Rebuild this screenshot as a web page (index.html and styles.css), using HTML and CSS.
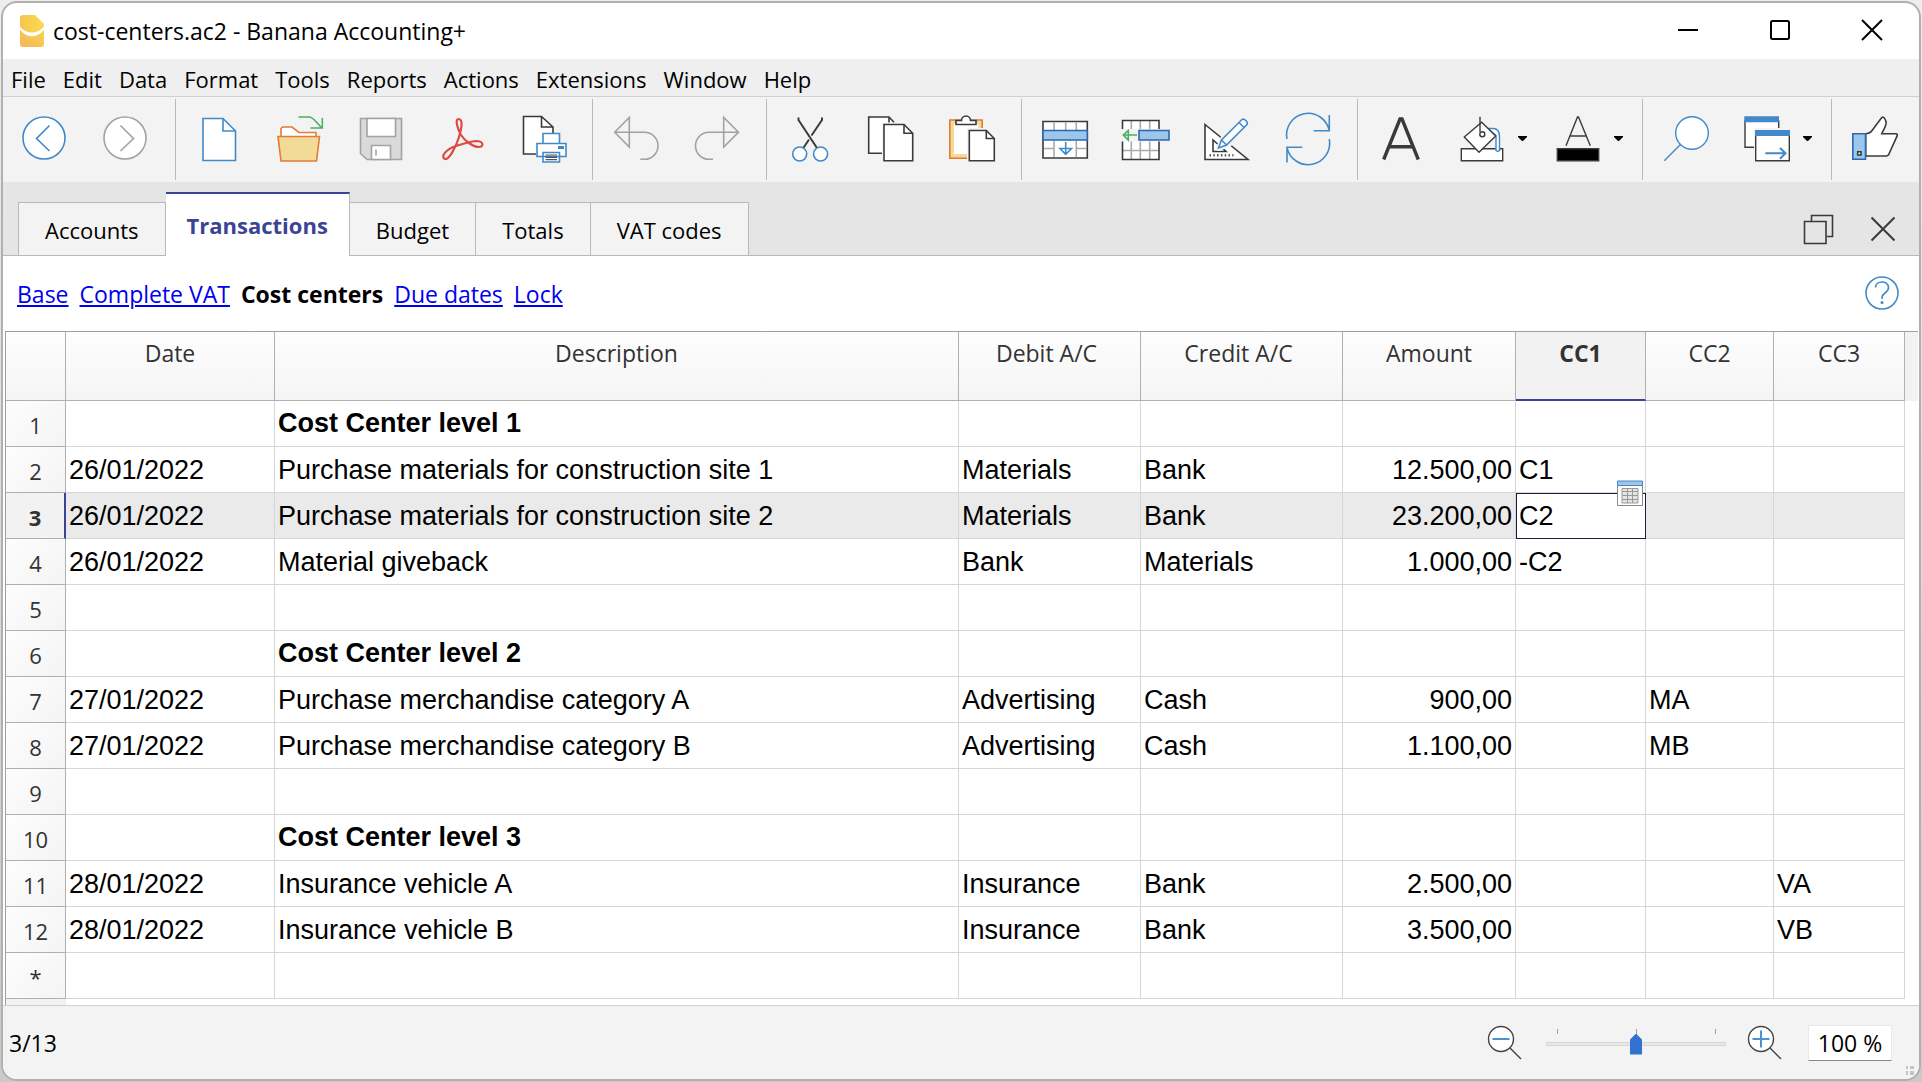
FILE: index.html
```html
<!DOCTYPE html>
<html lang="en">
<head>
<meta charset="utf-8">
<title>cost-centers.ac2 - Banana Accounting+</title>
<link rel="stylesheet" href="styles.css">
</head>
<body>
<div class="window">

<header class="titlebar">
  <svg class="app-icon" viewBox="0 0 24 32" aria-hidden="true">
    <defs>
      <linearGradient id="gt" x1="0" y1="0" x2="1" y2="0"><stop offset="0" stop-color="#f6c44f"/><stop offset="1" stop-color="#f8dc52"/></linearGradient>
      <linearGradient id="gb" x1="0" y1="1" x2="1" y2="0"><stop offset="0" stop-color="#f4b55c"/><stop offset="1" stop-color="#f8d54e"/></linearGradient>
    </defs>
    <path d="M0 11.500V3a3 3 0 0 1 3-3h12l9 9v2.500c-6 8-18 8-24 0z" fill="url(#gt)"/>
    <path d="M0 14.500c6 9 18 9 24 0V29a3 3 0 0 1-3 3H3a3 3 0 0 1-3-3z" fill="url(#gb)"/>
  </svg>
  <h1 class="title">cost-centers.ac2 - Banana Accounting+</h1>
  <div class="window-controls">
    <button type="button" aria-label="Minimize"><svg viewBox="0 0 24 24"><path d="M2 12h20"/></svg></button>
    <button type="button" aria-label="Maximize"><svg viewBox="0 0 24 24"><rect x="3" y="3" width="18" height="18" rx="1.5"/></svg></button>
    <button type="button" aria-label="Close"><svg viewBox="0 0 24 24"><path d="M2 2l20 20M22 2L2 22"/></svg></button>
  </div>
</header>

<nav class="menubar" aria-label="Menu">
  <button type="button">File</button>
  <button type="button">Edit</button>
  <button type="button">Data</button>
  <button type="button">Format</button>
  <button type="button">Tools</button>
  <button type="button">Reports</button>
  <button type="button">Actions</button>
  <button type="button">Extensions</button>
  <button type="button">Window</button>
  <button type="button">Help</button>
</nav>

<div class="toolbar" role="toolbar" aria-label="Tools">
  <div class="group">
    <button type="button" aria-label="Back"><svg class="ic blue" viewBox="0 0 48 48"><circle cx="24" cy="24" r="21" fill="#fff"/><path d="M29.500 11.500L16.500 24.500l13 12.500"/></svg></button>
    <button type="button" aria-label="Forward"><svg class="ic gray" viewBox="0 0 48 48"><circle cx="24" cy="24" r="21" fill="#fff"/><path d="M19.500 11.500l13 13-13 12.500"/></svg></button>
  </div>
  <div class="group">
    <button type="button" aria-label="New"><svg class="ic blue" viewBox="0 0 48 48"><path fill="#fff" d="M9 4.500h20l12.500 12.500v29.500H9z"/><path d="M29 4.500V17h12.500"/></svg></button>
    <button type="button" aria-label="Open"><svg class="ic" viewBox="0 0 48 48"><g stroke="#e07b39"><path fill="#fff" d="M6 23V14.500l1.500-1.500H17l7 5.500h17V23z"/><path fill="#f2da97" d="M3 22.500h41.500L41.500 47H6z"/></g><path stroke="#4caf64" d="M23.500 3H34c4 0 6 4 13 11M35.500 14H47.300V4"/></svg></button>
    <button type="button" aria-label="Save"><svg class="ic gray" viewBox="0 0 48 48"><path fill="#dadada" d="M4.500 4.500h41v41H11L4.500 39.500z"/><path fill="#fff" d="M11 4.500h28.500v18H11zM15.500 31.500h19v14h-19z"/><path d="M20 35.500v6"/></svg></button>
    <button type="button" aria-label="Export to PDF"><svg class="ic pdf" viewBox="0 0 48 48"><path d="M24 21C20 14 18 5 21.500 5C26 5 25 13 22 23C19 33 12 46 8 45C3 43 9 35 19 32C27 29.500 34 27.500 39 27C47 27 47 33 42 33C36 33 28 27 24 21Z"/></svg></button>
    <button type="button" aria-label="Print preview"><svg class="ic" viewBox="0 0 48 48"><path stroke="none" fill="#fff" d="M5.500 2.500h18L35 13v18H18v9H5.500z"/><path d="M18 40H5.500V2.500h18L35 13v6M23.500 2.500V13H35"/><g stroke="#4189c9" fill="#fff"><path d="M25 19.500h16.500v10H25zM19 29.500h29v13H19zM25 38.500h16.500v9.500H25z"/></g><path fill="#4189c9" stroke="none" d="M40 32h6v3h-6z"/><path stroke-width="1.200" stroke="#555" d="M27.500 41H39M27.500 43.300H39M27.500 45.600H39"/></svg></button>
  </div>
  <div class="group">
    <button type="button" aria-label="Undo"><svg class="ic gray" viewBox="0 0 48 48"><path d="M18.300 3.500V33L3.700 18.300zM3.700 18.300H33.500a13.500 13.500 0 0 1 0 27H29.300"/></svg></button>
    <button type="button" aria-label="Redo"><svg class="ic gray" viewBox="0 0 48 48"><path d="M31.700 3.500V33l14.800-14.700zM46.500 18.300H17a13.500 13.500 0 0 0 0 27h4"/></svg></button>
  </div>
  <div class="group">
    <button type="button" aria-label="Cut"><svg class="ic" viewBox="0 0 48 48"><path stroke-width="2" d="M13.500 3.500V6L32 34M37 3.500V6L26.500 21.500M24 25.500L18.300 34"/><g stroke="#4189c9" fill="#fff"><circle cx="14.700" cy="40" r="7"/><circle cx="35.600" cy="40" r="7"/></g></svg></button>
    <button type="button" aria-label="Copy"><svg class="ic" viewBox="0 0 48 48"><path stroke="none" fill="#fff" d="M2.700 3H23l5 5.500H16v31H2.700z"/><path d="M16 39.300H2.700V3H23l5 5.300M23 3v5.500"/><path fill="#fff" d="M18 10.500h20l8.700 8.800v27.400H18z"/><path d="M38 10.500v8.800h8.700"/></svg></button>
    <button type="button" aria-label="Paste"><svg class="ic" viewBox="0 0 48 48"><path stroke="#e07b39" fill="#f2da97" d="M2.800 6h32.400v38.300H2.800z"/><path stroke="none" fill="#fff" d="M7 10h24.500v30H7z"/><path fill="#fff" d="M9 10.500v-4h5.500a4.500 4.500 0 0 1 9 0H29v4z"/><path stroke="none" fill="#f3f3f3" d="M20 14h28v34H20z"/><path fill="#fff" d="M22.300 16.500h17l8 8v22.200h-25z"/><path d="M39.300 16.500v8h8"/></svg></button>
  </div>
  <div class="group">
    <button type="button" aria-label="Insert rows"><svg class="ic" viewBox="0 0 48 48"><path fill="#fff" d="M3 7.500h44.300V44H3z"/><path stroke="#aaa" d="M14 8.500v8M25.700 8.500v8M36.300 8.500v8M14 27v16M36.300 27v16M4 34.500h10M36.300 34.500h10"/><path stroke="#2f66b0" fill="#9cc7ea" d="M3 16.500h44.300V26H3z"/><path stroke="#4189c9" d="M25.700 28v12.300M20 34.500h11.500l-5.800 5.800z"/></svg></button>
    <button type="button" aria-label="Delete rows"><svg class="ic" viewBox="0 0 48 48"><path stroke="none" fill="#fff" d="M1.500 6H38v9H1.500zM1.500 27.500H38v18H1.500z"/><path stroke="#aaa" d="M10.300 6v9M19.300 6v9M28.700 6v9M10.300 27.500v18M19.300 27.500v18M28.700 27.500v18M1.500 36.500H38"/><path d="M1.500 15V6.500H38V15M1.500 27.500v18H38v-18"/><path stroke="#2f66b0" fill="#9cc7ea" d="M18 16.500h30v9.500H18z"/><path stroke="#4caf64" d="M16 21H2.500M7.300 16.500v9.500L2.300 21z"/></svg></button>
    <button type="button" aria-label="Edit draft"><svg class="ic" viewBox="0 0 48 48"><path fill="#fff" d="M3 10.500L46 45.500H3z"/><path d="M11 26v11.500h13z"/><path stroke-dasharray="1.500 2.300" stroke="#555" stroke-width="2.500" d="M7.500 41.300H31.500"/><path stroke="#f3f3f3" stroke-width="6" d="M17 34l5-11 10-8 4 7-8 7z" stroke-linejoin="round"/><g stroke="#4189c9"><path fill="#fff" d="M16.500 34l3-8L40 5.500c2-1.500 6.500 2.500 5 5L24.500 31z"/><path d="M37 8.500l5.500 5.500M19.500 26l5 5"/></g></svg></button>
    <button type="button" aria-label="Recalculate"><svg class="ic blue" viewBox="0 0 48 48"><path d="M4 25A21.300 21.300 0 0 1 46.300 16.700M46.300 1v15.700H30.700M46.300 25A21.300 21.300 0 0 1 4 33.300M4 48.500V33.300H19.300"/></svg></button>
  </div>
  <div class="group">
    <button type="button" aria-label="Font"><svg class="ic bold" viewBox="0 0 48 48"><path d="M7.700 45.500L24 5h2l16.300 40.500M13 32.700h24"/></svg></button>
    <button type="button" class="with-menu" aria-label="Background colour"><svg class="ic thin" viewBox="0 0 48 48"><path fill="#fff" d="M4.300 34.700h41.400v12H4.300z"/><path fill="#fff" stroke="#4189c9" d="M31 14.500h5c5 0 6.500 3 6.500 8v14l-2 1-1.500-1v-15z"/><path fill="#fff" d="M24.700 8.300L38.700 22 22 38.300 7.300 23z"/><path d="M23 2.700v15"/><circle cx="25.300" cy="20.300" r="2.500"/></svg><svg class="caret" viewBox="0 0 9 5"><path d="M0 0h9v1L5 5H4L0 1z"/></svg></button>
    <button type="button" class="with-menu" aria-label="Text colour"><svg class="ic thin" viewBox="0 0 48 48"><path fill="#000" d="M4.300 34.700h41.400v12H4.300z"/><path d="M13 31.700L24.500 3h1l11.800 28.700M16.500 22h17"/></svg><svg class="caret" viewBox="0 0 9 5"><path d="M0 0h9v1L5 5H4L0 1z"/></svg></button>
  </div>
  <div class="group">
    <button type="button" aria-label="Find"><svg class="ic blue thin" viewBox="0 0 48 48"><circle cx="31" cy="19" r="16.300" fill="#fff"/><path d="M19.700 30.300L3.300 46.700"/></svg></button>
    <button type="button" class="with-menu" aria-label="Windows"><svg class="ic thin" viewBox="0 0 48 48"><path stroke="none" fill="#fff" d="M3 3h34v30H3z"/><path d="M12 33.300H3V6M36.700 6v8"/><path stroke="none" fill="#f3f3f3" d="M12 14h26v21H12z"/><path fill="#fff" d="M13.700 17h33.600v29.700H13.700z"/><path stroke="none" fill="#4189c9" d="M2.300 2.300h34.700v6H2.300zM13 16h35v6H13z"/><path stroke="#4189c9" stroke-width="2" d="M23.300 39.300h20M38 34l5.500 5.300L38 44.700"/></svg><svg class="caret" viewBox="0 0 9 5"><path d="M0 0h9v1L5 5H4L0 1z"/></svg></button>
  </div>
  <div class="group">
    <button type="button" aria-label="Feedback"><svg class="ic" viewBox="0 0 48 48"><path fill="#fff" d="M15.700 19.700c3 0 4.500-.7 6-2.700L31 4.500c2-3 4-.5 5 3 1 4-2.500 8-4.300 12.200H46c1.500 0 1.500 1 1 2.500L38.500 41l-2 1H15.700z"/><path stroke="#2f66b0" fill="#9cc7ea" d="M2.800 19.800h12.700v25.400H2.800z"/><path d="M7.700 37.700h3.300v3.300H7.700z" fill="#fff"/></svg></button>
  </div>
</div>

<div class="tabstrip">
  <div class="tabs" role="tablist" aria-label="Tables">
    <button type="button" role="tab" class="tab">Accounts</button>
    <button type="button" role="tab" class="tab active" aria-selected="true">Transactions</button>
    <button type="button" role="tab" class="tab">Budget</button>
    <button type="button" role="tab" class="tab">Totals</button>
    <button type="button" role="tab" class="tab">VAT codes</button>
  </div>
  <div class="tab-actions">
    <button type="button" aria-label="Restore"><svg viewBox="0 0 32 32"><path d="M8.500 8V2.500h21v21H24M1.500 8.500h21.500v22H1.500z"/></svg></button>
    <button type="button" aria-label="Close table"><svg class="close" viewBox="0 0 32 32"><path d="M4.500 4.500l23 23M27.500 4.500l-23 23"/></svg></button>
  </div>
</div>

<div class="views">
  <nav class="view-links" aria-label="Views">
    <a href="#base">Base</a>
    <a href="#vat">Complete VAT</a>
    <strong>Cost centers</strong>
    <a href="#due">Due dates</a>
    <a href="#lock">Lock</a>
  </nav>
  <button type="button" class="help" aria-label="Help"><svg viewBox="0 0 34 34"><circle cx="17" cy="17" r="16"/><path d="M10.500 11.500c0-7 13-7.500 13 0 0 6-6.500 5-6.500 10v1.500"/><circle class="dot" cx="17" cy="26.500" r="1.500"/></svg></button>
</div>

<main class="sheet">
<table>
  <colgroup>
    <col class="c-num"><col class="c-date"><col><col class="c-debit"><col class="c-credit"><col class="c-amount"><col class="c-cc1"><col class="c-cc2"><col class="c-cc3"><col class="c-rest">
  </colgroup>
  <thead>
    <tr><th></th><th>Date</th><th>Description</th><th class="account">Debit A/C</th><th class="account">Credit A/C</th><th>Amount</th><th class="current">CC1</th><th>CC2</th><th>CC3</th><th class="rest"></th></tr>
  </thead>
  <tbody>
    <tr><th>1</th><td></td><td class="section">Cost Center level 1</td><td></td><td></td><td></td><td></td><td></td><td></td><td class="rest"></td></tr>
    <tr><th>2</th><td>26/01/2022</td><td>Purchase materials for construction site 1</td><td>Materials</td><td>Bank</td><td class="num">12.500,00</td><td>C1</td><td></td><td></td><td class="rest"></td></tr>
    <tr class="selected"><th>3</th><td>26/01/2022</td><td>Purchase materials for construction site 2</td><td>Materials</td><td>Bank</td><td class="num">23.200,00</td><td class="cursor">C2<button type="button" class="picker" aria-label="Choose cost center"><svg viewBox="0 0 26 26"><path fill="#fff" stroke="#888" d="M.5 5.500h25v20H.5z"/><path fill="#9cc7ea" stroke="#4a86c4" d="M.5 1h25v4.500H.5z"/><path fill="#e4e4e4" stroke="#999" d="M5 8.500h16v14.500H5zM5 11.500h16M5 15.500h16M5 19.500h16M10.500 8.500V23M15.500 8.500V23"/></svg></button></td><td></td><td></td><td class="rest"></td></tr>
    <tr><th>4</th><td>26/01/2022</td><td>Material giveback</td><td>Bank</td><td>Materials</td><td class="num">1.000,00</td><td>-C2</td><td></td><td></td><td class="rest"></td></tr>
    <tr><th>5</th><td></td><td></td><td></td><td></td><td></td><td></td><td></td><td></td><td class="rest"></td></tr>
    <tr><th>6</th><td></td><td class="section">Cost Center level 2</td><td></td><td></td><td></td><td></td><td></td><td></td><td class="rest"></td></tr>
    <tr><th>7</th><td>27/01/2022</td><td>Purchase merchandise category A</td><td>Advertising</td><td>Cash</td><td class="num">900,00</td><td></td><td>MA</td><td></td><td class="rest"></td></tr>
    <tr><th>8</th><td>27/01/2022</td><td>Purchase merchandise category B</td><td>Advertising</td><td>Cash</td><td class="num">1.100,00</td><td></td><td>MB</td><td></td><td class="rest"></td></tr>
    <tr><th>9</th><td></td><td></td><td></td><td></td><td></td><td></td><td></td><td></td><td class="rest"></td></tr>
    <tr><th>10</th><td></td><td class="section">Cost Center level 3</td><td></td><td></td><td></td><td></td><td></td><td></td><td class="rest"></td></tr>
    <tr><th>11</th><td>28/01/2022</td><td>Insurance vehicle A</td><td>Insurance</td><td>Bank</td><td class="num">2.500,00</td><td></td><td></td><td>VA</td><td class="rest"></td></tr>
    <tr><th>12</th><td>28/01/2022</td><td>Insurance vehicle B</td><td>Insurance</td><td>Bank</td><td class="num">3.500,00</td><td></td><td></td><td>VB</td><td class="rest"></td></tr>
    <tr><th>*</th><td></td><td></td><td></td><td></td><td></td><td></td><td></td><td></td><td class="rest"></td></tr>
  </tbody>
</table>
<div class="gutter"></div>
</main>

<footer class="statusbar">
  <span class="position">3/13</span>
  <div class="zoom">
    <button type="button" aria-label="Zoom out"><svg viewBox="0 0 36 36"><circle cx="14" cy="14" r="12.500"/><path d="M23 23l11 11"/><path class="sign" d="M5.500 14h17"/></svg></button>
    <input class="slider" type="range" min="0" max="200" value="100" aria-label="Zoom">
    <button type="button" aria-label="Zoom in"><svg viewBox="0 0 36 36"><circle cx="14" cy="14" r="12.500"/><path d="M23 23l11 11"/><path class="sign" d="M5.500 14h17M14 5.500v17"/></svg></button>
    <input class="percent" type="text" value="100 %" aria-label="Zoom percentage">
    <svg class="grip" viewBox="0 0 8 10" aria-hidden="true"><path d="M0 0h2v3H0zM4 0h4v3H4zM0 5h2v4H0zM4 5h4v4H4z"/></svg>
  </div>
</footer>

</div>
</body>
</html>
```
FILE: styles.css
```css
* { box-sizing: border-box; }

body {
  margin: 0;
  padding: 1px;
  min-height: 100vh;
  display: flex;
  background: linear-gradient(#eeeeee, #cacaca);
  font: 23px/30px "Open Sans", "Noto Sans", sans-serif;
  color: #000;
}

button {
  margin: 0;
  padding: 0;
  border: 0;
  background: none;
  font: inherit;
  color: inherit;
}

svg { display: block; fill: none; }

.window {
  flex: 1;
  min-width: 0;
  display: flex;
  flex-direction: column;
  border: 2px solid #b0b0b0;
  border-radius: 16px;
  overflow: hidden;
  background: #fff;
}

/* Title bar */
.titlebar {
  display: flex;
  align-items: center;
  height: 56px;
  padding: 0 35px 0 17px;
}
.app-icon { width: 24px; height: 32px; }
.title {
  flex: 1;
  margin: 0 0 0 9px;
  font-size: 23px;
  font-weight: 400;
}
.window-controls {
  display: flex;
  gap: 68px;
  padding-bottom: 2px;
}
.window-controls svg {
  width: 24px;
  height: 24px;
  stroke: #000;
  stroke-width: 2;
}

/* Menu */
.menubar {
  display: flex;
  gap: 17px;
  height: 38px;
  padding: 4px 8px 2px;
  background: #efefef;
  border-bottom: 1px solid #d0d0d0;
  font-size: 22px;
}

/* Toolbar */
.toolbar {
  display: flex;
  height: 85px;
  padding: 2px 0 2px 1px;
  background: #f3f3f3;
}
.group { display: flex; }
.group + .group {
  margin-left: 9px;
  padding-left: 2px;
  border-left: 1px solid #b9b9b9;
}
.group button {
  display: flex;
  align-items: center;
  width: 81px;
  padding: 0 17px 3px 16px;
}
.group .with-menu {
  width: 96px;
  gap: 13px;
  padding-right: 0;
}
.ic {
  flex: none;
  width: 48px;
  height: 48px;
  overflow: visible;
  stroke: #3a3a3a;
  stroke-width: 1.6;
}
.ic.thin { stroke-width: 1.4; }
.ic.blue { stroke: #4189c9; }
.ic.gray { stroke: #a2a2a2; }
.ic.pdf { stroke: #dd4a42; stroke-width: 2.2; }
.ic.bold { stroke-width: 3.4; }
.caret { width: 9px; height: 5px; fill: #000; }

/* Table tabs */
.tabstrip {
  display: flex;
  justify-content: space-between;
  height: 74px;
  padding: 10px 20px 0 15px;
  background: linear-gradient(#b9b9b9, #b9b9b9) bottom / 100% 1px no-repeat #e5e5e5;
}
.tabs { display: flex; align-items: flex-end; font-size: 22px; }
.tab {
  height: 54px;
  padding: 2px 26px 0;
  border: 1px solid #b9b9b9;
  border-left-width: 0;
  background: #f3f3f3;
}
.tab:first-child { border-left-width: 1px; }
.tab.active {
  height: 64px;
  padding: 0 21px;
  border-top: 2px solid #3b4494;
  border-bottom: 0;
  background: #fff;
  color: #3b4494;
  font-weight: 700;
}
.tab-actions {
  display: flex;
  align-items: center;
  gap: 32px;
  padding-top: 9px;
}
.tab-actions svg {
  width: 32px;
  height: 32px;
  stroke: #3a3a3a;
  stroke-width: 1.6;
}
.tab-actions .close { stroke-width: 2; }

/* View links */
.views {
  display: flex;
  align-items: center;
  justify-content: space-between;
  height: 75px;
  padding: 0 20px 2px 14px;
}
.view-links { display: flex; gap: 11px; padding-top: 2px; }
.view-links a { color: #0000ee; text-underline-offset: 2px; }
.view-links strong { font-weight: 700; }
.help svg { width: 34px; height: 34px; stroke: #4189c9; stroke-width: 1.6; }
.help .dot { fill: #4189c9; stroke: none; }

/* Sheet */
.sheet {
  flex: 1;
  display: flex;
  flex-direction: column;
  margin: 0 1px 0 2px;
  border: solid #9f9f9f;
  border-width: 1px 0 0 1px;
}
table {
  width: 100%;
  table-layout: fixed;
  border-collapse: separate;
  border-spacing: 0;
}
.c-num { width: 60px; }
.c-date { width: 209px; }
.c-debit { width: 182px; }
.c-credit { width: 202px; }
.c-amount { width: 173px; }
.c-cc1 { width: 130px; }
.c-cc2 { width: 128px; }
.c-cc3 { width: 131px; }
.c-rest { width: 13px; }

th {
  padding: 0;
  font-weight: 400;
  color: #333;
}
thead th {
  height: 69px;
  padding-top: 6px;
  vertical-align: top;
  border-right: 1px solid #b0b0b0;
  border-bottom: 1px solid #b0b0b0;
  background: linear-gradient(#fdfdfd, #f5f5f5);
}
thead .account { padding-right: 6px; }
thead .current {
  border-bottom: 2px solid #3b4494;
  background: #f2f2f2;
  font-weight: 700;
}
thead .rest { border: 0; background: #f2f2f2; }

tbody th {
  height: 46px;
  padding-top: 3px;
  border-right: 1px solid #b0b0b0;
  border-bottom: 1px solid #b0b0b0;
  background: linear-gradient(135deg, #fdfdfd, #f4f4f4);
  font-size: 22px;
}
td {
  height: 46px;
  padding: 0 3px;
  border-right: 1px solid #d6d6d6;
  border-bottom: 1px solid #d6d6d6;
  font: 27px/32px "Liberation Sans", Arial, sans-serif;
  white-space: nowrap;
}
.section { padding-bottom: 2px; font-weight: 700; }
.num { text-align: right; }
.selected td { background: #eaeaea; }
.selected th {
  border-right: 2px solid #3b4494;
  background: #f2f2f2;
  font-weight: 700;
}
tbody .rest { border: 0; background: #fff; }
.selected .cursor {
  position: relative;
  background: #fff;
  outline: 1px solid #1c1c3c;
  outline-offset: -1px;
}
.picker {
  position: absolute;
  top: -13px;
  right: 2px;
}
.picker svg { width: 26px; height: 26px; }
.gutter { flex: 1; width: 60px; min-height: 6px; background: #f2f2f2; }

/* Status bar */
.statusbar {
  display: flex;
  align-items: center;
  justify-content: space-between;
  height: 74px;
  padding: 0 5px 0 6px;
  background: #f3f3f3;
  border-top: 1px solid #d0d0d0;
}
.zoom { display: flex; align-items: center; height: 100%; }
.zoom button svg { width: 36px; height: 36px; stroke: #444; stroke-width: 1.4; }
.zoom circle { fill: #fff; }
.zoom .sign { stroke: #4a92d0; stroke-width: 2; }

.slider {
  appearance: none;
  width: 180px;
  height: 32px;
  margin: 2px 21px 0 23px;
  background:
    linear-gradient(#a0a098, #a0a098) 11px 1px / 1px 5px no-repeat,
    linear-gradient(#a0a098, #a0a098) 90px 1px / 1px 5px no-repeat,
    linear-gradient(#a0a098, #a0a098) 169px 1px / 1px 5px no-repeat;
}
.slider::-webkit-slider-runnable-track {
  height: 4px;
  border: 1px solid #d6d6d6;
  background: #e7e7e7;
}
.slider::-webkit-slider-thumb {
  appearance: none;
  width: 12px;
  height: 21px;
  margin-top: -9px;
  background: #3273d0;
  clip-path: polygon(0 6px, 6px 0, 12px 6px, 12px 21px, 0 21px);
}
.percent {
  width: 84px;
  height: 36px;
  margin-left: 25px;
  padding: 0;
  border: 1px solid #e8e8e8;
  border-bottom-color: #868686;
  background: #fff;
  font: inherit;
  color: #000;
  text-align: center;
}
.grip {
  width: 8px;
  height: 10px;
  margin: 0 0 3px 14px;
  align-self: flex-end;
  fill: #c4c4c4;
}
```
